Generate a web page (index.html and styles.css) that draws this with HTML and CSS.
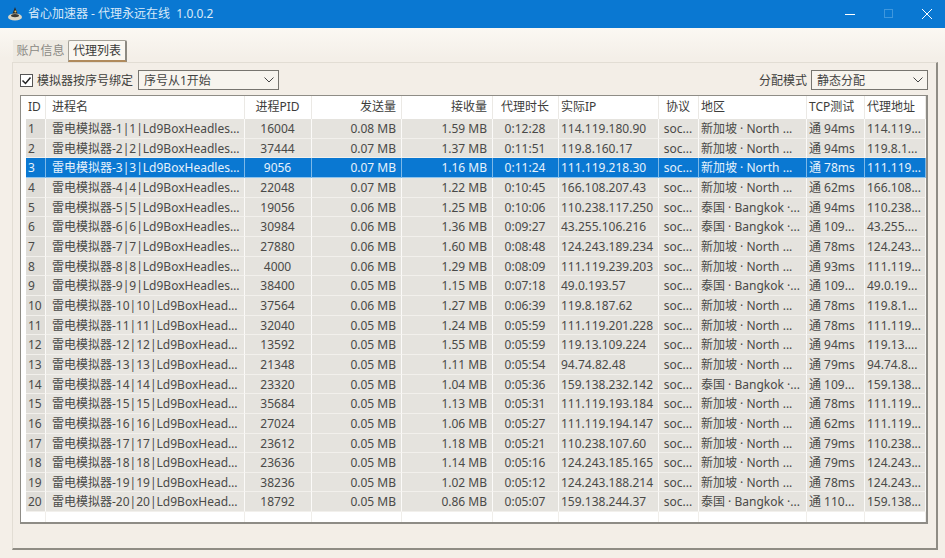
FILE: index.html
```html
<!DOCTYPE html>
<html lang="zh">
<head>
<meta charset="utf-8">
<title>省心加速器</title>
<link rel="stylesheet" href="styles.css">
</head>
<body>
<div class="window">
  <header class="titlebar">
    <svg class="logo" width="16" height="16" viewBox="0 0 16 16"><path d="M5 9L8 1l3 8z" fill="#2b2b2b"/><ellipse cx="8" cy="11" rx="7" ry="3.6" fill="#d9d4c4"/><ellipse cx="8" cy="9.6" rx="4" ry="1.6" fill="#3a3a36"/><circle cx="8.4" cy="5.6" r="1" fill="#e6c35a"/></svg>
    <span class="title">省心加速器 - 代理永远在线&nbsp;&nbsp;1.0.0.2</span>
    <div class="controls">
      <svg width="12" height="12" viewBox="0 0 12 12" class="ctl-min"><path d="M1 6.500h10" stroke="#fff" fill="none"/></svg>
      <svg width="12" height="12" viewBox="0 0 12 12" class="ctl-max"><rect x="1.500" y="1.500" width="8" height="8" stroke="#3f97dd" fill="none"/></svg>
      <svg width="12" height="12" viewBox="0 0 12 12" class="ctl-close"><path d="M1 1l10 10M11 1L1 11" stroke="#fff" fill="none"/></svg>
    </div>
  </header>
  <main class="content">
    <nav class="tabs">
      <span class="tab">账户信息</span>
      <span class="tab active">代理列表</span>
    </nav>
    <section class="panel">
      <div class="toolbar">
        <label class="check"><svg class="checkbox" width="13" height="13" viewBox="0 0 13 13"><rect x=".5" y=".5" width="12" height="12" fill="#fff" stroke="#555"/><path d="M2.500 6.500l3 3 5-6" fill="none" stroke="#222" stroke-width="1.500"/></svg>模拟器按序号绑定</label>
        <div class="select seq"><span>序号从1开始</span><svg width="10" height="6" viewBox="0 0 10 6"><path d="M.5.5L5 5 9.500.5" fill="none" stroke="#444"/></svg></div>
        <span class="mode-label">分配模式</span>
        <div class="select mode"><span>静态分配</span><svg width="10" height="6" viewBox="0 0 10 6"><path d="M.5.5L5 5 9.500.5" fill="none" stroke="#444"/></svg></div>
      </div>
      <div class="table" id="table">
        <div class="row head">
          <div class="cell">ID</div><div class="cell">进程名</div><div class="cell center">进程PID</div><div class="cell right">发送量</div><div class="cell right">接收量</div><div class="cell center">代理时长</div><div class="cell">实际IP</div><div class="cell center">协议</div><div class="cell">地区</div><div class="cell">TCP测试</div><div class="cell">代理地址</div>
        </div>
        <div id="rows"></div>
        <div class="row tail">
          <div class="cell"></div><div class="cell"></div><div class="cell"></div><div class="cell"></div><div class="cell"></div><div class="cell"></div><div class="cell"></div><div class="cell"></div><div class="cell"></div><div class="cell"></div><div class="cell"></div>
        </div>
      </div>
    </section>
  </main>
</div>
<script src="app.js"></script>
</body>
</html>
```
FILE: styles.css
```css
* { box-sizing: border-box; }
html, body { margin: 0; height: 100%; }
body {
  font-family: "Noto Sans", "Noto Sans CJK SC", sans-serif;
  font-size: 12px;
  color: #4a4a48;
  background: #f4efe8;
  overflow: hidden;
}
.window { display: flex; flex-direction: column; height: 558px; }
.titlebar {
  height: 28px;
  background: #0a78d2;
  color: #d8e9f8;
  display: flex;
  align-items: center;
  padding-left: 7px;
  flex: none;
}
.logo { margin-right: 5px; }
.title { font-size: 12px; line-height: 28px; }
.controls { margin-left: auto; display: flex; align-items: center; }
.ctl-min { margin-right: 27px; }
.ctl-max { margin-right: 26px; }
.ctl-close { margin-right: 12px; }
.content {
  flex: 1;
  display: flex;
  flex-direction: column;
  padding: 12px 7px 8px 12px;
  background: linear-gradient(#fbf8f3, #f4efe8 30px);
}
.tabs { display: flex; height: 22px; padding-left: 1px; flex: none; }
.tab {
  width: 55px;
  text-align: center;
  line-height: 21px;
  color: #8b8a85;
  background: #efebe3;
}
.tab.active {
  width: 59px;
  color: #3a3a38;
  background: #faf7f1;
  border: 1px solid #a5a299;
  border-right: 2px solid #8d8a82;
  border-bottom: 2px solid #b08a5c;
  border-radius: 2px 2px 0 0;
  line-height: 19px;
}
.panel {
  flex: 1;
  border: 1px solid #e2ddd4;
  border-right: 2px solid #8f8c84;
  border-bottom: 2px solid #8f8c84;
  padding: 7px 8px 24px 7px;
  display: flex;
  flex-direction: column;
  background: #f3eee7;
}
.toolbar { display: flex; align-items: center; height: 20px; margin-bottom: 5px; flex: none; }
.check { display: flex; align-items: center; gap: 4px; color: #3f3f3d; width: 118px; }
.checkbox { flex: none; }
.select {
  height: 20px;
  border: 1px solid #77756f;
  border-bottom-width: 1px;
  background: #f7f4ee;
  display: flex;
  align-items: center;
  justify-content: space-between;
  padding: 0 4px 0 5px;
  color: #444;
}
.seq { width: 141px; }
.mode-label { margin-left: auto; margin-right: 4px; color: #3f3f3d; }
.mode { width: 117px; }
.table {
  flex: 1;
  border: 1px solid #8e8c86;
  border-bottom-width: 2px;
  border-right-width: 2px;
  background: #fff;
  display: flex;
  flex-direction: column;
  padding-left: 5px;
  padding-right: 2px;
  min-height: 0;
}
.row {
  display: grid;
  grid-template-columns: 20px 199px 67px 90px 91px 66px 100px 40px 108px 58px 61px;
  height: 19.67px;
}
.cell {
  padding: 0 3px 0 2px;
  line-height: 19px;
  white-space: nowrap;
  overflow: hidden;
  text-overflow: ellipsis;
  border-right: 1px solid #fbfaf8;
  border-bottom: 1px solid #f2f0ec;
  background: #e5e3de;
}
.cell:nth-child(2) { padding-left: 6px; padding-right: 4px; background: #e7e5e0; }
.cell:first-child { background: #dfddd8; }
.row.head { height: 23px; }
.row.head .cell {
  background: #fff;
  color: #3c3c3a;
  line-height: 22px;
  border-bottom: 0;
  border-right: 1px solid #ebe9e5;
}
.row.tail { flex: 1; height: auto; min-height: 0; }
.row.tail .cell { background: #fff; border-bottom: 0; border-right: 1px solid #f0eeea; }
.center { text-align: center; }
.right { text-align: right; padding-right: 5px; }
.row.sel .cell {
  background: #0a78d2;
  color: #e6f2fc;
  border-right-color: #7cb8e8;
  border-bottom-color: #8ec4ee;
}
```
FILE: app.js
```js
var data = [
  ["16004","0.08","1.59","0:12:28","114.119.180.90","sg","94ms","114.119..."],
  ["37444","0.07","1.37","0:11:51","119.8.160.17","sg","94ms","119.8.1..."],
  ["9056","0.07","1.16","0:11:24","111.119.218.30","sg","78ms","111.119..."],
  ["22048","0.07","1.22","0:10:45","166.108.207.43","sg","62ms","166.108..."],
  ["19056","0.06","1.25","0:10:06","110.238.117.250","th","94ms","110.238..."],
  ["30984","0.06","1.36","0:09:27","43.255.106.216","th","109...","43.255...."],
  ["27880","0.06","1.60","0:08:48","124.243.189.234","sg","78ms","124.243..."],
  ["4000","0.06","1.29","0:08:09","111.119.239.203","sg","93ms","111.119..."],
  ["38400","0.05","1.15","0:07:18","49.0.193.57","th","109...","49.0.19..."],
  ["37564","0.06","1.27","0:06:39","119.8.187.62","sg","78ms","119.8.1..."],
  ["32040","0.05","1.24","0:05:59","111.119.201.228","sg","78ms","111.119..."],
  ["13592","0.05","1.55","0:05:59","119.13.109.224","sg","94ms","119.13...."],
  ["21348","0.05","1.11","0:05:54","94.74.82.48","sg","79ms","94.74.8..."],
  ["23320","0.05","1.04","0:05:36","159.138.232.142","th","109...","159.138..."],
  ["35684","0.05","1.13","0:05:31","111.119.193.184","sg","78ms","111.119..."],
  ["27024","0.05","1.06","0:05:27","111.119.194.147","sg","62ms","111.119..."],
  ["23612","0.05","1.18","0:05:21","110.238.107.60","sg","79ms","110.238..."],
  ["23636","0.05","1.14","0:05:16","124.243.185.165","sg","79ms","124.243..."],
  ["38236","0.05","1.02","0:05:12","124.243.188.214","sg","78ms","124.243..."],
  ["18792","0.05","0.86","0:05:07","159.138.244.37","th","110...","159.138..."]
];
var regions = { sg: "新加坡 · North ...", th: "泰国 · Bangkok ·..." };
var html = "";
data.forEach(function (d, i) {
  var id = i + 1;
  var name = "雷电模拟器-" + id + "|" + id + "|Ld9BoxHeadless.exe";
  var short = id < 10 ? name.slice(0, -2) + "..." : name.slice(0, -5) + "...";
  html += '<div class="row' + (id === 3 ? " sel" : "") + '">' +
    '<div class="cell">' + id + "</div>" +
    '<div class="cell">' + short + "</div>" +
    '<div class="cell center">' + d[0] + "</div>" +
    '<div class="cell right">' + d[1] + " MB</div>" +
    '<div class="cell right">' + d[2] + " MB</div>" +
    '<div class="cell center">' + d[3] + "</div>" +
    '<div class="cell">' + d[4] + "</div>" +
    '<div class="cell center">soc...</div>' +
    '<div class="cell">' + regions[d[5]] + "</div>" +
    '<div class="cell">通 ' + d[6] + "</div>" +
    '<div class="cell">' + d[7] + "</div>" +
    "</div>";
});
document.getElementById("rows").innerHTML = html;
```
